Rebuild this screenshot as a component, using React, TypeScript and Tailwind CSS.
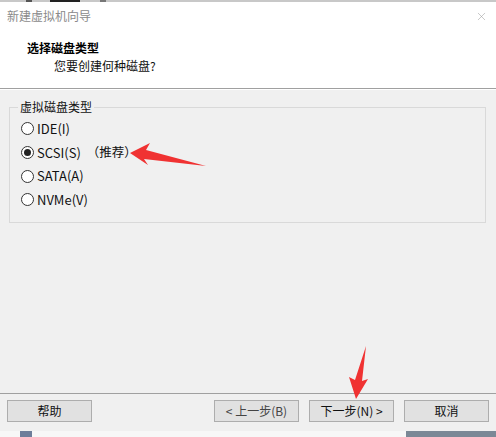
import { X } from "lucide-react";

const font = { fontFamily: '"Noto Sans CJK SC", "Noto Sans", sans-serif' };

const options = [
  { label: "IDE(I)", checked: false },
  { label: "SCSI(S)", checked: true, extra: "（推荐）" },
  { label: "SATA(A)", checked: false },
  { label: "NVMe(V)", checked: false },
];

function Radio({ checked }: { checked: boolean }) {
  return (
    <span className="flex h-[13px] w-[13px] items-center justify-center rounded-full border border-[#333] bg-white">
      {checked && <span className="h-[7px] w-[7px] rounded-full bg-[#222]" />}
    </span>
  );
}

function Btn({ children, className = "" }: { children: React.ReactNode; className?: string }) {
  return (
    <button className={`flex h-[22px] w-[85px] items-center justify-center border border-[#adadad] bg-[#e1e1e1] text-[12px] text-[#111] ${className}`}>
      {children}
    </button>
  );
}

export default function App() {
  return (
    <div className="relative flex h-[437px] w-[496px] flex-col overflow-hidden bg-[#f0f0f0]" style={font}>
      {/* strip of the desktop above the window */}
      <div className="flex h-[2px] bg-[#c8c8c8]">
        <div className="ml-[26px] w-[6px] bg-[#555]" />
        <div className="ml-[18px] w-[30px] bg-[#222]" />
        <div className="ml-[20px] w-[6px] bg-[#777]" />
      </div>

      {/* title bar */}
      <div className="flex h-[28px] items-center justify-between bg-white pl-[7px] pr-[8px]">
        <span className="text-[12px] text-[#8a8a8a]">新建虚拟机向导</span>
        <X className="h-[13px] w-[13px] text-[#9a9a9a]" strokeWidth={1} />
      </div>

      {/* header */}
      <div className="flex h-[58px] flex-col bg-white pl-[27px] pt-[9px]">
        <span className="text-[12px] font-bold leading-[18px] text-black">选择磁盘类型</span>
        <span className="pl-[27px] text-[12px] leading-[17px] text-[#111]">您要创建何种磁盘?</span>
      </div>
      <div className="h-px bg-[#a0a0a0]" />
      <div className="h-px bg-white" />

      {/* body */}
      <div className="flex-1 px-[9px] pt-[10px]">
        <fieldset className="h-[123px] w-[477px] border border-[#d9d9d9] px-[11px] pb-0 pt-[3px]">
          <legend className="ml-[-3px] px-[2px] text-[12px] leading-[14px] text-[#111]">虚拟磁盘类型</legend>
          <div className="flex flex-col">
            {options.map((o) => (
              <label key={o.label} className="flex h-[23.7px] items-center gap-[3px] text-[13px] text-[#111]">
                <Radio checked={o.checked} />
                <span>{o.label}</span>
                {o.extra && <span className="ml-[3px] text-[12.5px]">{o.extra}</span>}
              </label>
            ))}
          </div>
        </fieldset>
      </div>

      {/* footer */}
      <div className="h-px bg-[#a0a0a0]" />
      <div className="flex h-[37px] items-center px-[7px] pb-[4px]">
        <Btn>帮助</Btn>
        <div className="ml-auto flex gap-[10px]">
          <Btn className="text-[#444]">&lt; 上一步(B)</Btn>
          <Btn>下一步(N) &gt;</Btn>
          <Btn>取消</Btn>
        </div>
      </div>
      <div className="flex h-[6px] bg-[#f7f7f7]">
        <div className="ml-[20px] w-[12px] bg-[#6d7d9a]" />
        <div className="ml-auto w-[90px] bg-[#7b8896]" />
      </div>

      {/* red annotation arrows */}
      <svg className="pointer-events-none absolute left-0 top-0" width="496" height="437">
        <polygon points="130,153 150,143 146,150 206,166 144,159 148,165" fill="#f03232" />
        <polygon points="366,346 362,381 368,379 356,399 349,377 355,380" fill="#f03232" />
      </svg>
    </div>
  );
}
